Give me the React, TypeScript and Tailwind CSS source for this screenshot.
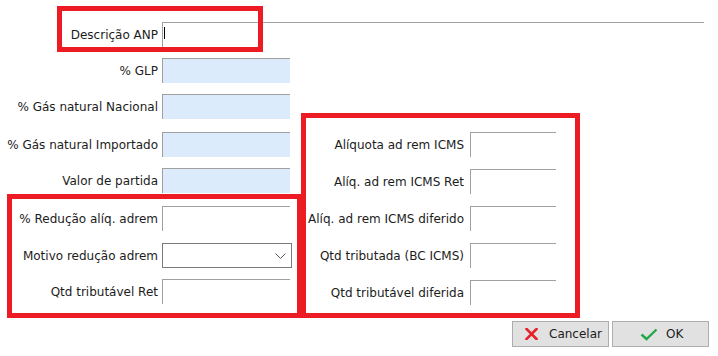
import React from "react";

function BlueField() {
  return <div className="h-[25px] w-[128px] bg-[#dcebfc] border-t border-l border-[#a0a0a0]" />;
}

function WhiteField({ w }: { w: string }) {
  return <div className={`h-[25px] ${w} bg-white border-t border-l border-[#a0a0a0]`} />;
}

function LeftRow({ label, children, mt }: { label: string; children: React.ReactNode; mt: string }) {
  return (
    <div className={`flex items-center h-[25px] ${mt}`}>
      <div className="w-[158px] text-right whitespace-nowrap">{label}</div>
      <div className="ml-[4px]">{children}</div>
    </div>
  );
}

function RightRow({ label, mt }: { label: string; mt: string }) {
  return (
    <div className={`flex items-center h-[25px] ${mt}`}>
      <div className="w-[170px] text-right whitespace-nowrap">{label}</div>
      <div className="ml-[6px]">
        <div className="h-[25px] w-[86px] bg-white border-t border-l border-[#a0a0a0]" />
      </div>
    </div>
  );
}

export default function App() {
  return (
    <div className="relative w-[718px] h-[356px] bg-white overflow-hidden font-['DejaVu_Sans',sans-serif] text-[12px] leading-[14px] text-[#1c1c1c]">
      <div className="flex flex-col pt-[22px]">
        {/* Descrição row */}
        <div className="flex items-center h-[25px]">
          <div className="w-[158px] text-right whitespace-nowrap">Descrição ANP</div>
          <div className="ml-[4px] relative h-[25px] w-[542px] bg-white border-t border-l border-[#a0a0a0]">
            <div className="absolute left-[1px] top-[4px] w-[1px] h-[12px] bg-black" />
          </div>
        </div>

        <div className="flex mt-[11px]">
          {/* Left column */}
          <div className="flex flex-col w-[292px]">
            <LeftRow label="% GLP" mt="mt-0">
              <BlueField />
            </LeftRow>
            <LeftRow label="% Gás natural Nacional" mt="mt-[11px]">
              <BlueField />
            </LeftRow>
            <LeftRow label="% Gás natural Importado" mt="mt-[13px]">
              <BlueField />
            </LeftRow>
            <LeftRow label="Valor de partida" mt="mt-[11px]">
              <BlueField />
            </LeftRow>
            <LeftRow label="% Redução alíq. adrem" mt="mt-[13px]">
              <WhiteField w="w-[128px]" />
            </LeftRow>
            <LeftRow label="Motivo redução adrem" mt="mt-[12px]">
              <div className="h-[25px] w-[130px] bg-white border border-[#7a7a7a] flex items-center justify-end pr-[5px]">
                <svg width="11" height="6" viewBox="0 0 11 6" fill="none">
                  <path d="M0.5 0.5 L5.5 5.5 L10.5 0.5" stroke="#5a5a5a" strokeWidth="1" />
                </svg>
              </div>
            </LeftRow>
            <LeftRow label="Qtd tributável Ret" mt="mt-[11px]">
              <WhiteField w="w-[128px]" />
            </LeftRow>
          </div>

          {/* Right column */}
          <div className="flex flex-col ml-[2px] mt-[74px]">
            <RightRow label="Alíquota ad rem ICMS" mt="mt-0" />
            <RightRow label="Alíq. ad rem ICMS Ret" mt="mt-[12px]" />
            <RightRow label="Alíq. ad rem ICMS diferido" mt="mt-[12px]" />
            <RightRow label="Qtd tributada (BC ICMS)" mt="mt-[12px]" />
            <RightRow label="Qtd tributável diferida" mt="mt-[12px]" />
          </div>
        </div>

        {/* Buttons */}
        <div className="flex justify-end gap-[3px] pr-[9px] mt-[16px]">
          <button className="h-[26px] w-[97px] bg-[#e1e1e1] border border-[#adadad] flex items-center pl-[12px] gap-[11px]">
            <svg width="13" height="12" viewBox="0 0 13 12">
              <path d="M1.5 1 L11.5 11 M11.5 1 L1.5 11" stroke="#e8202a" strokeWidth="2.6" strokeLinecap="square" />
            </svg>
            <span>Cancelar</span>
          </button>
          <button className="h-[26px] w-[97px] bg-[#e1e1e1] border border-[#adadad] flex items-center pl-[27px] gap-[8px]">
            <svg width="18" height="13" viewBox="0 0 18 13">
              <path d="M1.5 6.5 L6.5 11 L16.5 1.5" stroke="#22a84a" strokeWidth="2.4" fill="none" />
            </svg>
            <span>OK</span>
          </button>
        </div>
      </div>

      {/* Red annotation boxes */}
      <div className="absolute left-[57px] top-[6px] w-[206px] h-[46px] border-[5px] border-[#ed1c24]" />
      <div className="absolute left-[7px] top-[194px] w-[295px] h-[124px] border-[5px] border-[#ed1c24]" />
      <div className="absolute left-[301px] top-[113px] w-[279px] h-[205px] border-[5px] border-[#ed1c24]" />
    </div>
  );
}
